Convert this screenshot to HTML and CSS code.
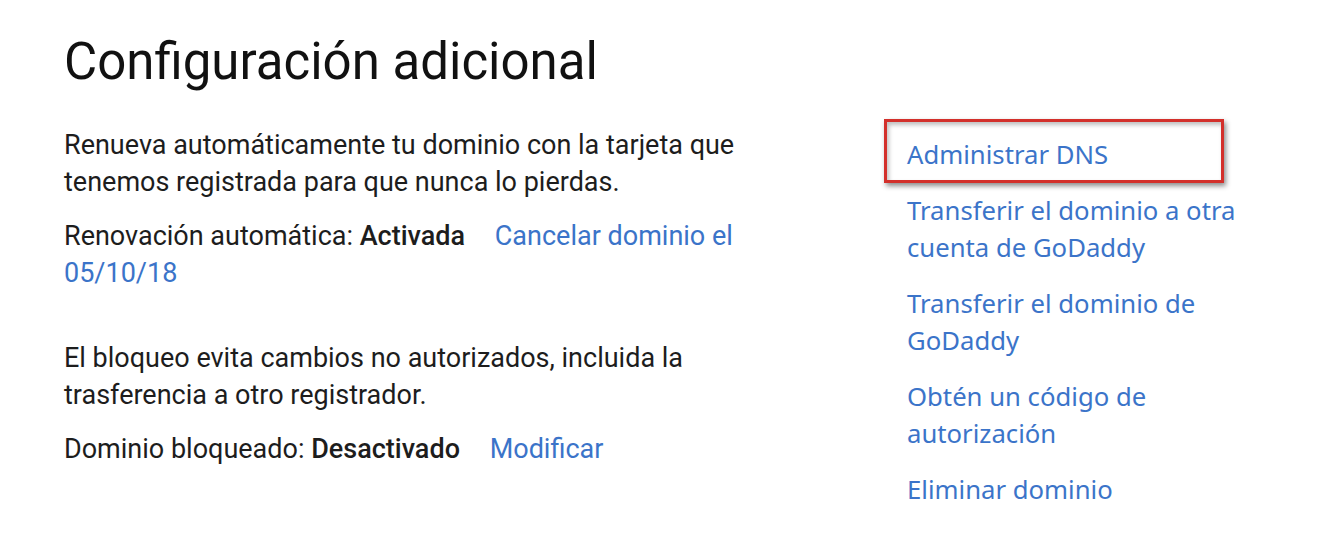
FILE: index.html
```html
<!DOCTYPE html>
<html lang="es">
<head>
    <meta charset="UTF-8">
    <title>Configuración adicional</title>
    <link rel="stylesheet" href="styles.css">
</head>
<body>
<div class="settings">
    <h1>Configuración adicional</h1>
    <div class="settings-cols">
        <div class="main-col">
            <section class="block">
                <p>Renueva automáticamente tu dominio con la tarjeta que tenemos registrada para que nunca lo pierdas.</p>
                <p class="status">Renovación automática: <b>Activada</b> <a href="#">Cancelar dominio el 05/10/18</a></p>
            </section>
            <section class="block">
                <p>El bloqueo evita cambios no autorizados, incluida la trasferencia a otro registrador.</p>
                <p class="status">Dominio bloqueado: <b>Desactivado</b> <a href="#">Modificar</a></p>
            </section>
        </div>
        <ul class="actions">
            <li class="highlight"><a href="#">Administrar DNS</a></li>
            <li><a href="#">Transferir el dominio a otra cuenta de GoDaddy</a></li>
            <li><a href="#">Transferir el dominio de GoDaddy</a></li>
            <li><a href="#">Obtén un código de autorización</a></li>
            <li><a href="#">Eliminar dominio</a></li>
        </ul>
    </div>
</div>
</body>
</html>
```
FILE: styles.css
```css
body {
    margin: 0;
    background: #fff;
    color: #1d1d1d;
    font-family: "Roboto", "Liberation Sans", sans-serif;
}

a {
    color: #3b74c9;
    text-decoration: none;
}

.settings {
    padding: 30px 0 0 64px;
}

h1 {
    margin: 0 0 33px 0;
    font-size: 51px;
    font-weight: 400;
    line-height: 64px;
    color: #111;
}

.settings-cols {
    display: flex;
}

.main-col {
    width: 690px;
}

.block {
    margin-bottom: 48px;
}

.block p {
    margin: 0;
    font-size: 27px;
    line-height: 37px;
}

.block .status {
    margin-top: 17px;
}

.status b {
    font-weight: 500;
    margin-right: 23px;
}

.actions {
    list-style: none;
    margin: -8px 0 0 153px;
    padding: 0;
    width: 340px;
    font-family: "Noto Sans", "Roboto", sans-serif;
}

.actions li {
    font-size: 25.7px;
    line-height: 37px;
    margin-bottom: 19px;
}

.actions .highlight {
    margin: 0 0 9px -23px;
    padding: 14px 20px 7px 20px;
    width: 294px;
    border: 3px solid #d3302b;
    box-shadow: 2px 3px 5px rgba(0, 0, 0, 0.45), inset 2px 3px 4px rgba(0, 0, 0, 0.25);
}
```
